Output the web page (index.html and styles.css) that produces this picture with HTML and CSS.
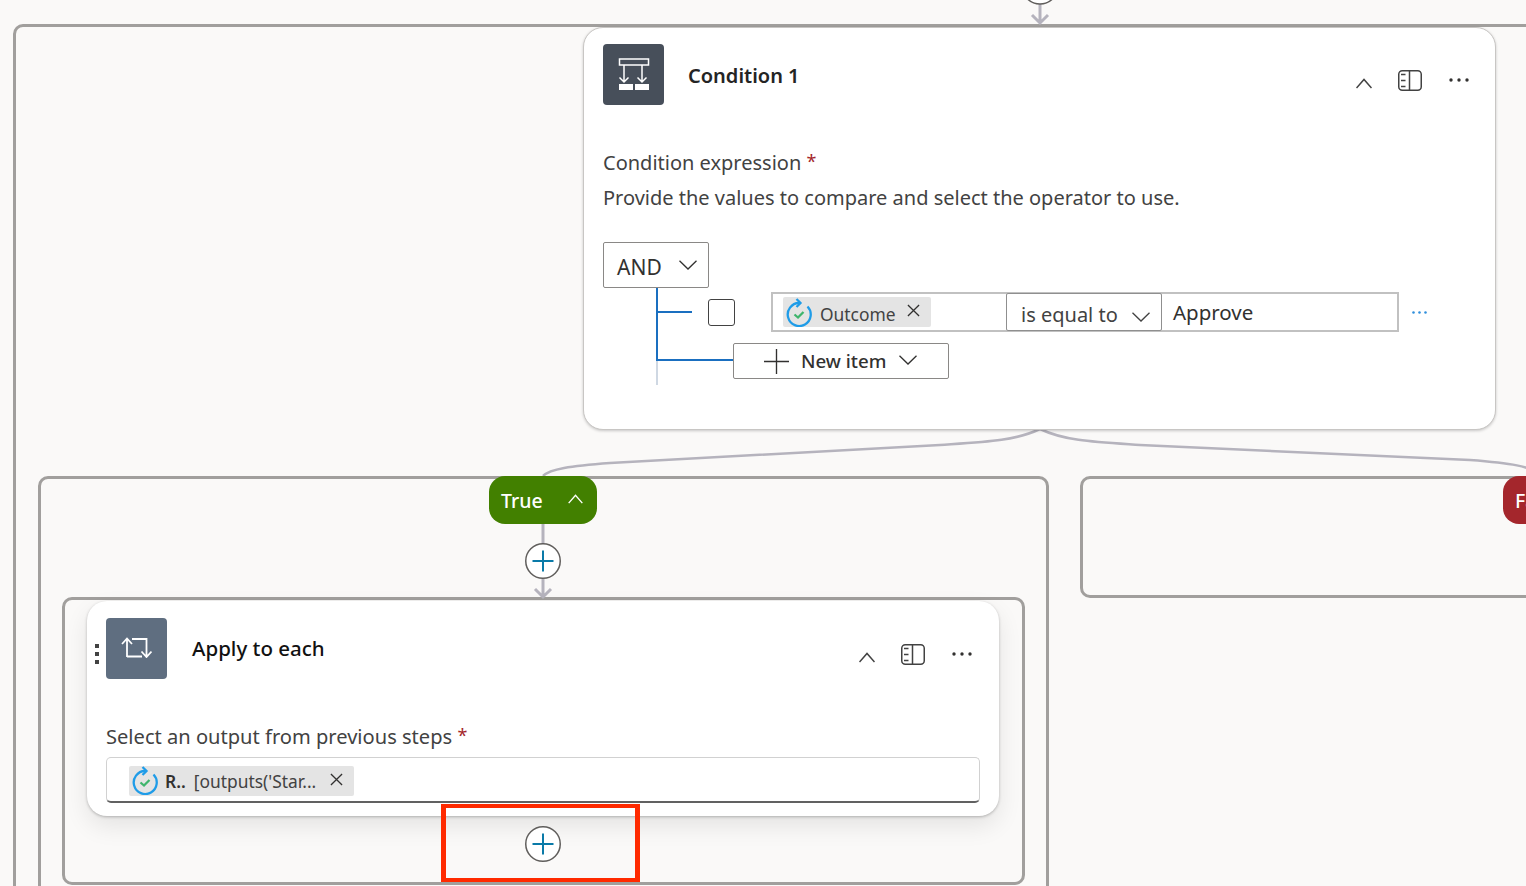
FILE: index.html
```html
<!DOCTYPE html>
<html lang="en">
<head>
    <meta charset="UTF-8">
    <title>Condition 1</title>
    <link rel="stylesheet" href="styles.css">
</head>
<body>
<svg class="defs" width="0" height="0">
    <symbol id="chev-up" viewBox="0 0 16 11"><path d="M.5 10 8 1.500 15.500 10" fill="none" stroke="currentColor" stroke-width="1.500"/></symbol>
    <symbol id="chev-down" viewBox="0 0 18 10"><path d="M.5 .7 9 9 17.500 .7" fill="none" stroke="currentColor" stroke-width="1.300"/></symbol>
    <symbol id="panel" viewBox="0 0 24 21">
        <rect x=".75" y=".75" width="22.500" height="19.500" rx="3.500" fill="none" stroke="currentColor" stroke-width="1.500"/>
        <path d="M11.500 1v19M3 4.500h4.500M3 10.500h4.500M3 16.500h4.500" fill="none" stroke="currentColor" stroke-width="1.500"/>
    </symbol>
    <symbol id="more" viewBox="0 0 20 4"><circle cx="2" cy="2" r="1.700" fill="currentColor"/><circle cx="10" cy="2" r="1.700" fill="currentColor"/><circle cx="18" cy="2" r="1.700" fill="currentColor"/></symbol>
    <symbol id="close" viewBox="0 0 14 14"><path d="M1 1l12 12M13 1 1 13" fill="none" stroke="currentColor" stroke-width="1.400"/></symbol>
    <symbol id="approval" viewBox="0 0 26 29">
        <path d="M13 5A11.500 11.500 0 1 0 21.500 8.500" fill="none" stroke="#1f9ce8" stroke-width="2.300"/>
        <path d="M10.500 1 14.500 5 10.500 9" fill="none" stroke="#1f9ce8" stroke-width="2.300"/>
        <path d="M8.500 16.500l3.500 3 5.500-5.500" fill="none" stroke="#3fb56c" stroke-width="2.300"/>
    </symbol>
    <symbol id="add" viewBox="0 0 36 36">
        <circle cx="18" cy="18" r="17.250" fill="#fff" stroke="#605e5c" stroke-width="1.500"/>
        <path d="M18 7.500v21M7.500 18h21" fill="none" stroke="#0a7aa8" stroke-width="2"/>
    </symbol>
</svg>

<div class="canvas">
    <div class="frame frame-outer"></div>
    <div class="frame frame-true"></div>
    <div class="frame frame-false"></div>
    <div class="frame frame-apply"></div>

    <!-- connectors -->
    <svg class="lines" width="1526" height="886" viewBox="0 0 1526 886">
        <g fill="none" stroke="#b5b3bd" stroke-width="3">
            <path d="M1040 0v22M1032 15l8 8 8-8"/>
            <path d="M1040 429C1015 441 985 442 940 445L610 463C570 466 550 469 543 476" stroke-width="2.500"/>
            <path d="M1040 429C1065 441 1095 442 1140 445L1470 460C1510 463 1530 466 1545 476" stroke-width="2.500"/>
            <path d="M543 524v72M535 589l8 8 8-8"/>
        </g>
        <circle cx="1040" cy="-14" r="18" fill="#fff" stroke="#605e5c" stroke-width="1.500"/>
    </svg>

    <div class="node card-condition">
        <div class="card-head">
            <div class="op-icon op-dark">
                <svg width="32" height="33" viewBox="0 0 32 33">
                    <path d="M1.500 1h29v6h-29zM6 7v17M24 7v17M1.500 19.500 6 24l4.500-4.500M19.500 19.500 24 24l4.500-4.500" fill="none" stroke="#fff" stroke-width="1.500"/>
                    <path d="M1 26h14v6H1zM17 26h14v6H17z" fill="#fff"/>
                </svg>
            </div>
            <div class="card-title">Condition 1</div>
            <div class="card-actions">
                <svg class="act-chev"><use href="#chev-up"/></svg>
                <svg class="act-panel"><use href="#panel"/></svg>
                <svg class="act-more"><use href="#more"/></svg>
            </div>
        </div>
        <div class="field-label cond-label">Condition expression <span class="req">*</span></div>
        <div class="field-help">Provide the values to compare and select the operator to use.</div>

        <div class="builder">
            <div class="and-box">AND <svg class="and-chev"><use href="#chev-down"/></svg></div>
            <div class="tree">
                <i class="tree-v"></i><i class="tree-v2"></i><i class="tree-h1"></i><i class="tree-h2"></i>
                <div class="rule">
                    <div class="check"></div>
                    <div class="rule-fields">
                        <div class="rule-left">
                            <div class="chip">
                                <svg class="chip-icon"><use href="#approval"/></svg>
                                <span>Outcome</span>
                                <svg class="chip-x"><use href="#close"/></svg>
                            </div>
                        </div>
                        <div class="rule-op">is equal to <svg class="op-chev"><use href="#chev-down"/></svg></div>
                        <div class="rule-val">Approve</div>
                    </div>
                    <svg class="rule-more"><use href="#more"/></svg>
                </div>
                <div class="new-item">
                    <svg class="new-plus" viewBox="0 0 26 26"><path d="M13 0v26M0 13h26" stroke="#323130" stroke-width="1.400"/></svg>
                    <span>New item</span>
                    <svg class="new-chev"><use href="#chev-down"/></svg>
                </div>
            </div>
        </div>
    </div>

    <div class="node pill pill-true">True <svg class="pill-chev"><use href="#chev-up"/></svg></div>
    <div class="node pill pill-false">False</div>

    <svg class="node add-btn add-1"><use href="#add"/></svg>

    <div class="node card-apply">
        <div class="card-head">
            <div class="op-icon op-slate">
                <svg class="loop-icon" width="31" height="21" viewBox="0 0 31 21">
                    <path d="M6 20V2M1 7l5-5.500L11 7M11 2h14.500v18.500M20.500 14.500l5 5.500 5-5.500M6 19.500h15" fill="none" stroke="#fff" stroke-width="1.800"/>
                </svg>
            </div>
            <div class="card-title">Apply to each</div>
            <div class="card-actions">
                <svg class="act-chev"><use href="#chev-up"/></svg>
                <svg class="act-panel"><use href="#panel"/></svg>
                <svg class="act-more"><use href="#more"/></svg>
            </div>
        </div>
        <div class="field-label apply-label">Select an output from previous steps <span class="req">*</span></div>
        <div class="token-field">
            <div class="chip chip-long">
                <svg class="chip-icon"><use href="#approval"/></svg>
                <b>R..</b>
                <span>[outputs('Star...</span>
                <svg class="chip-x"><use href="#close"/></svg>
            </div>
        </div>
        <div class="drag"><i></i><i></i><i></i></div>
    </div>

    <svg class="node add-btn add-2"><use href="#add"/></svg>
    <div class="node callout"></div>
</div>
</body>
</html>
```

FILE: styles.css
```css
* {
    box-sizing: border-box;
}

body {
    margin: 0;
    background: #faf9f8;
    font-family: "Noto Sans", "Liberation Sans", sans-serif;
    color: #323130;
}

.defs {
    position: absolute;
}

.canvas {
    position: relative;
    width: 1526px;
    height: 886px;
    overflow: hidden;
}

.lines {
    position: absolute;
    left: 0;
    top: 0;
}

.node {
    position: absolute;
}

/* scope frames */
.frame {
    position: absolute;
    border: 3px solid #a19f9d;
    border-radius: 10px;
}

.frame-outer {
    left: 13px;
    top: 24px;
    width: 1700px;
    height: 1000px;
}

.frame-true {
    left: 38px;
    top: 476px;
    width: 1011px;
    height: 600px;
}

.frame-false {
    left: 1080px;
    top: 476px;
    width: 800px;
    height: 122px;
}

.frame-apply {
    left: 62px;
    top: 597px;
    width: 963px;
    height: 288px;
}

/* cards */
.card-condition {
    left: 583px;
    top: 27px;
    width: 913px;
    height: 403px;
    padding: 16px 19px;
    background: #fff;
    border: 1px solid #c8c6c4;
    border-radius: 20px;
    box-shadow: 0 1px 3px rgba(0, 0, 0, .2);
}

.card-apply {
    left: 87px;
    top: 601px;
    width: 912px;
    height: 215px;
    padding: 17px 19px;
    background: #fff;
    border-radius: 20px;
    box-shadow: 0 1px 3px rgba(0, 0, 0, .25), 0 10px 24px rgba(0, 0, 0, .09);
}

.card-head {
    display: flex;
    align-items: flex-start;
}

.op-icon {
    display: flex;
    align-items: center;
    justify-content: center;
    width: 61px;
    height: 61px;
    border-radius: 4px;
    flex: none;
}

.op-dark {
    background: #474f5a;
}

.op-slate {
    background: #5f6e80;
}

.loop-icon {
    margin-bottom: 3px;
}

.card-title {
    margin: 17px 0 0 24px;
    font-size: 20px;
    font-weight: 600;
    line-height: 30px;
    color: #242424;
}

.card-apply .card-title {
    font-size: 20.500px;
    font-weight: 500;
    color: #111;
    margin-top: 15px;
    margin-left: 25px;
}

.card-actions {
    display: flex;
    align-items: center;
    margin: 26px 8px 0 auto;
    color: #424242;
}

.card-condition .card-actions {
    margin-right: 7px;
}

.act-chev {
    width: 16px;
    height: 11px;
    margin-top: 6px;
}

.act-panel {
    width: 24px;
    height: 21px;
    margin-left: 26px;
}

.act-more {
    width: 20px;
    height: 4px;
    margin: -2px 0 0 27px;
    color: #323130;
}

.field-label {
    font-size: 20px;
    line-height: 28px;
    color: #424242;
}

.cond-label {
    margin-top: 44px;
}

.field-help {
    margin-top: 7px;
    font-size: 20px;
    line-height: 28px;
    color: #424242;
}

.req {
    font-size: 18px;
    line-height: 0;
    vertical-align: 2px;
    color: #a4262c;
}

/* condition builder */
.builder {
    margin-top: 30px;
}

.and-box {
    display: flex;
    align-items: center;
    width: 106px;
    height: 46px;
    padding: 4px 0 0 13px;
    font-size: 21px;
    color: #323130;
    border: 1px solid #8a8886;
    border-radius: 2px;
}

.and-chev {
    width: 18px;
    height: 10px;
    margin: -4px 0 0 17px;
    color: #323130;
}

.tree {
    position: relative;
    padding-top: 4px;
}

.tree-v, .tree-v2, .tree-h1, .tree-h2 {
    position: absolute;
    display: block;
}

.tree-v {
    left: 53px;
    top: 0;
    width: 2px;
    height: 73px;
    background: #1a6fc0;
}

.tree-v2 {
    left: 53px;
    top: 73px;
    width: 2px;
    height: 24px;
    background: #cfd8e3;
}

.tree-h1 {
    left: 53px;
    top: 23px;
    width: 36px;
    height: 2px;
    background: #1a6fc0;
}

.tree-h2 {
    left: 53px;
    top: 71px;
    width: 77px;
    height: 2px;
    background: #1a6fc0;
}

.rule {
    display: flex;
    align-items: center;
    height: 40px;
    padding-left: 105px;
}

.check {
    width: 27px;
    height: 27px;
    margin-top: 1px;
    border: 1.500px solid #424242;
    border-radius: 3px;
    flex: none;
}

.rule-fields {
    display: flex;
    height: 40px;
    margin-left: 36px;
    border: 2px solid #c1c1c1;
    flex: none;
}

.rule-left {
    display: flex;
    align-items: center;
    width: 233px;
    padding-left: 10px;
}

.rule-left .chip > span {
    margin-top: 4px;
}

.chip {
    display: flex;
    align-items: center;
    height: 30px;
    background: #e4e4e4;
    border-radius: 2px;
    font-size: 17.400px;
    color: #424242;
}

.chip-icon {
    width: 26px;
    height: 29px;
    margin-left: 3px;
    flex: none;
}

.chip > span {
    margin-left: 8px;
    white-space: nowrap;
}

.chip-x {
    width: 13px;
    height: 13px;
    margin: -3px 11px 0 11px;
    color: #323130;
}

.rule-op {
    display: flex;
    align-items: center;
    width: 156px;
    margin: -1px 0;
    padding: 5px 0 0 14px;
    font-size: 20px;
    color: #424242;
    background: #fff;
    border: 1.500px solid #8f8f8f;
    border-radius: 2px;
    white-space: nowrap;
}

.op-chev {
    width: 18px;
    height: 10px;
    margin: 5px 0 0 14px;
    flex: none;
}

.rule-val {
    display: flex;
    align-items: center;
    width: 235px;
    padding: 0 0 1px 11px;
    font-size: 20.500px;
    color: #323130;
}

.rule-more {
    width: 17px;
    height: 3px;
    margin-left: 12px;
    color: #2f8fdc;
}

.new-item {
    display: flex;
    align-items: center;
    width: 216px;
    height: 36px;
    margin: 11px 0 0 130px;
    padding-left: 30px;
    font-size: 18.700px;
    font-weight: 500;
    color: #323130;
    background: #fff;
    border: 1px solid #8a8886;
    border-radius: 2px;
}

.new-plus {
    width: 25px;
    height: 25px;
    flex: none;
}

.new-item > span {
    margin: -2px 0 0 12px;
    white-space: nowrap;
}

.new-chev {
    width: 18px;
    height: 10px;
    margin: -3px 0 0 13px;
}

/* branch pills */
.pill {
    display: flex;
    align-items: center;
    height: 48px;
    border-radius: 16px;
    color: #fff;
    font-size: 19.500px;
    font-weight: 500;
    white-space: nowrap;
}

.pill-true {
    left: 489px;
    top: 476px;
    width: 108px;
    padding-left: 12px;
    background: #428000;
}

.pill-chev {
    width: 15px;
    height: 10px;
    margin-left: 25px;
    margin-top: -3px;
}

.pill-false {
    left: 1503px;
    top: 476px;
    width: 110px;
    padding-left: 12px;
    background: #a4262c;
}

.add-btn {
    width: 36px;
    height: 36px;
}

.add-1 {
    left: 525px;
    top: 543px;
}

.add-2 {
    left: 525px;
    top: 826px;
}

/* apply to each */
.apply-label {
    margin-top: 44px;
    font-size: 20.100px;
}

.token-field {
    display: flex;
    align-items: center;
    height: 46px;
    margin-top: 6px;
    padding: 2px 0 0 22px;
    background: #fff;
    border: 1px solid #d1d1d1;
    border-bottom: 2px solid #616161;
    border-radius: 5px;
}

.chip-long {
    width: 225px;
}

.chip-long b {
    margin-left: 7px;
    font-weight: 600;
    color: #323130;
}

.chip-long > span {
    margin-left: 8px;
}

.chip-long .chip-x {
    margin-left: auto;
    margin-right: 11px;
}

.drag {
    position: absolute;
    left: 8px;
    top: 43px;
    display: flex;
    flex-direction: column;
    gap: 4px;
}

.drag i {
    display: block;
    width: 4px;
    height: 4px;
    background: #424242;
}

/* red box drawn over the screenshot */
.callout {
    left: 441px;
    top: 804px;
    width: 199px;
    height: 78px;
    border: 4px solid #ff2a00;
    border-left-width: 5px;
    border-right-width: 5px;
}
```
